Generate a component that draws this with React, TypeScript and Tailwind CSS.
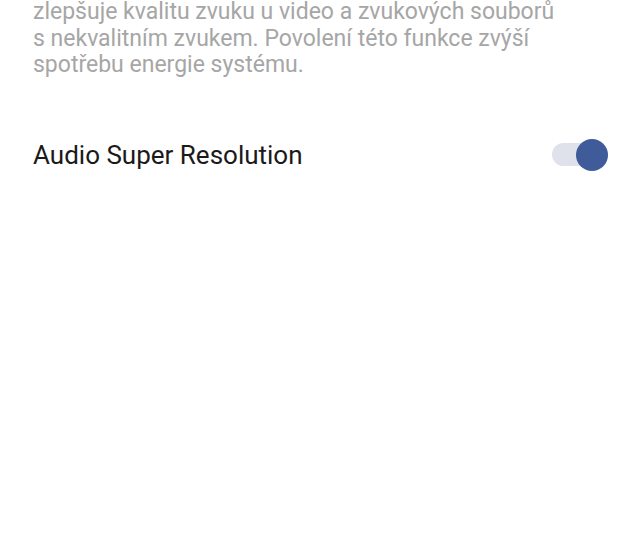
export default function App() {
  return (
    <div className="w-[640px] h-[560px] bg-white overflow-hidden relative" style={{ fontFamily: "Roboto, sans-serif" }}>
      <div className="pl-[33px] pr-[20px] -mt-[1px] text-[23px] leading-[26.5px] text-[#a6a6a6]">
        <p className="whitespace-nowrap">zlepšuje kvalitu zvuku u video a zvukových souborů</p>
        <p className="whitespace-nowrap">s nekvalitním zvukem. Povolení této funkce zvýší</p>
        <p className="whitespace-nowrap">spotřebu energie systému.</p>
      </div>
      <div className="flex items-center justify-between pl-[33px] pr-[32px] mt-[60px] h-[32px]">
        <span className="text-[26px] leading-[32px] text-[#1a1a1a]">Audio Super Resolution</span>
        <div className="relative w-[56px] h-[32px] flex items-center">
          <div className="w-[50px] h-[23px] rounded-full bg-[#dfe2ea]" />
          <div className="absolute right-0 top-0 w-[32px] h-[32px] rounded-full bg-[#3f5b99]" />
        </div>
      </div>
    </div>
  );
}
